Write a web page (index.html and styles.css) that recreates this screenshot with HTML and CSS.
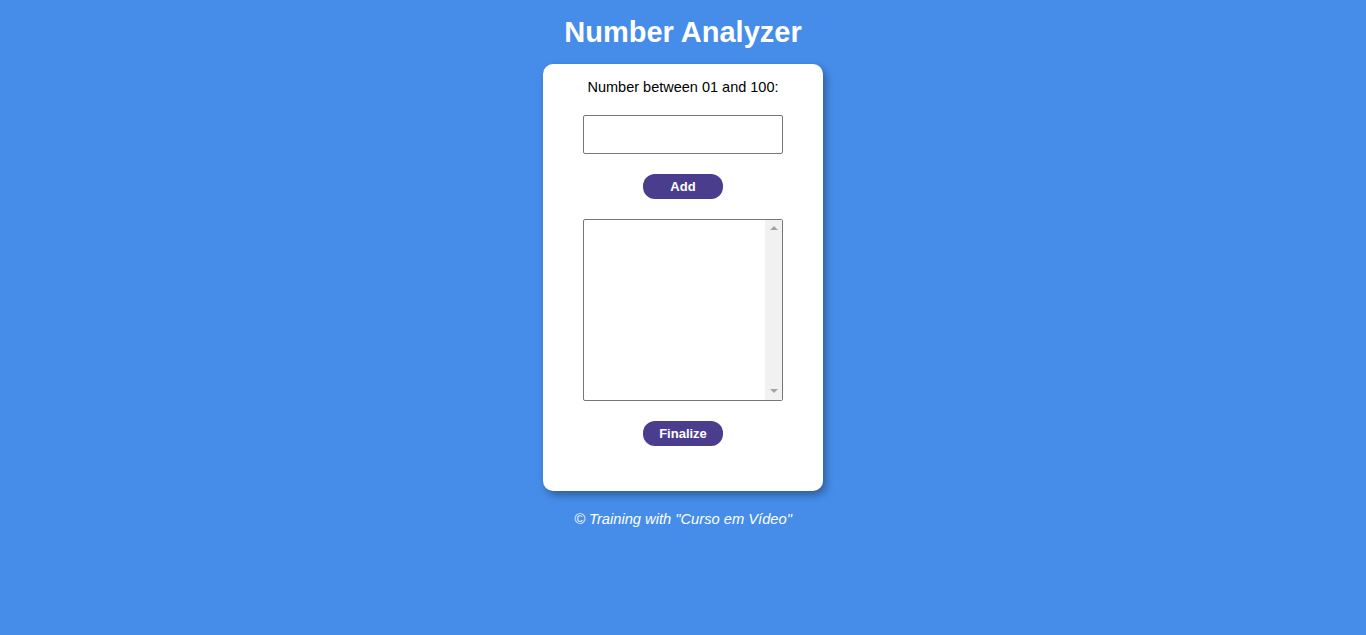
FILE: index.html
```html
<!DOCTYPE html>
<html>
<head>
<meta charset="utf-8">
<title>Number Analyzer</title>
<link rel="stylesheet" href="styles.css">
</head>
<body>
<header class="top">
  <h1 class="title">Number Analyzer</h1>
</header>
<main class="card">
  <label class="label" for="num">Number between 01 and 100:</label>
  <input class="field" type="number" id="num">
  <button class="btn">Add</button>
  <div class="list">
    <div class="list-body"></div>
    <div class="scrollbar">
      <span class="arrow arrow-up"></span>
      <span class="arrow arrow-down"></span>
    </div>
  </div>
  <button class="btn">Finalize</button>
</main>
<footer class="foot">
  <p class="credit">&copy; Training with "Curso em Vídeo"</p>
</footer>
</body>
</html>
```
FILE: styles.css
```css
html, body {
  margin: 0;
  padding: 0;
}
body {
  background: #468dea;
  font-family: "Liberation Sans", Arial, sans-serif;
  min-height: 635px;
  display: flex;
  flex-direction: column;
  align-items: center;
}
.top {
  padding-top: 14px;
  height: 50px;
  box-sizing: border-box;
}
.title {
  margin: 0;
  color: #fff;
  font-size: 29px;
  font-weight: bold;
  line-height: 36px;
}
.card {
  margin-top: 14px;
  width: 280px;
  height: 427px;
  box-sizing: border-box;
  background: #fff;
  border-radius: 10px;
  box-shadow: 3px 4px 8px rgba(0, 0, 0, 0.35);
  display: flex;
  flex-direction: column;
  align-items: center;
  padding-top: 14px;
}
.label {
  font-size: 14.5px;
  line-height: 18px;
  color: #000;
}
.field {
  margin-top: 19px;
  width: 200px;
  height: 39px;
  box-sizing: border-box;
  border: 1px solid #767676;
  border-radius: 2px;
  padding: 0 4px;
  font-size: 15px;
  background: #fff;
  -moz-appearance: textfield;
}
.field::-webkit-inner-spin-button,
.field::-webkit-outer-spin-button {
  -webkit-appearance: none;
  margin: 0;
}
.btn {
  margin-top: 20px;
  width: 80px;
  height: 25px;
  border: none;
  border-radius: 12px;
  background: #4a3d8d;
  color: #fff;
  font-family: "Liberation Sans", Arial, sans-serif;
  font-weight: bold;
  font-size: 13px;
  padding: 0;
}
.list {
  margin-top: 20px;
  width: 200px;
  height: 182px;
  box-sizing: border-box;
  border: 1px solid #767676;
  border-radius: 2px;
  background: #fff;
  display: flex;
}
.list-body {
  flex: 1;
}
.scrollbar {
  width: 17px;
  background: #f1f1f1;
  display: flex;
  flex-direction: column;
  justify-content: space-between;
  align-items: center;
  padding: 6px 0 7px;
}
.arrow {
  width: 0;
  height: 0;
  border-left: 4px solid transparent;
  border-right: 4px solid transparent;
}
.arrow-up {
  border-bottom: 4px solid #a3a3a3;
}
.arrow-down {
  border-top: 4px solid #a3a3a3;
}
.foot {
  margin-top: 19px;
}
.credit {
  margin: 0;
  color: #fff;
  font-style: italic;
  font-size: 14.7px;
  line-height: 18px;
}
```
